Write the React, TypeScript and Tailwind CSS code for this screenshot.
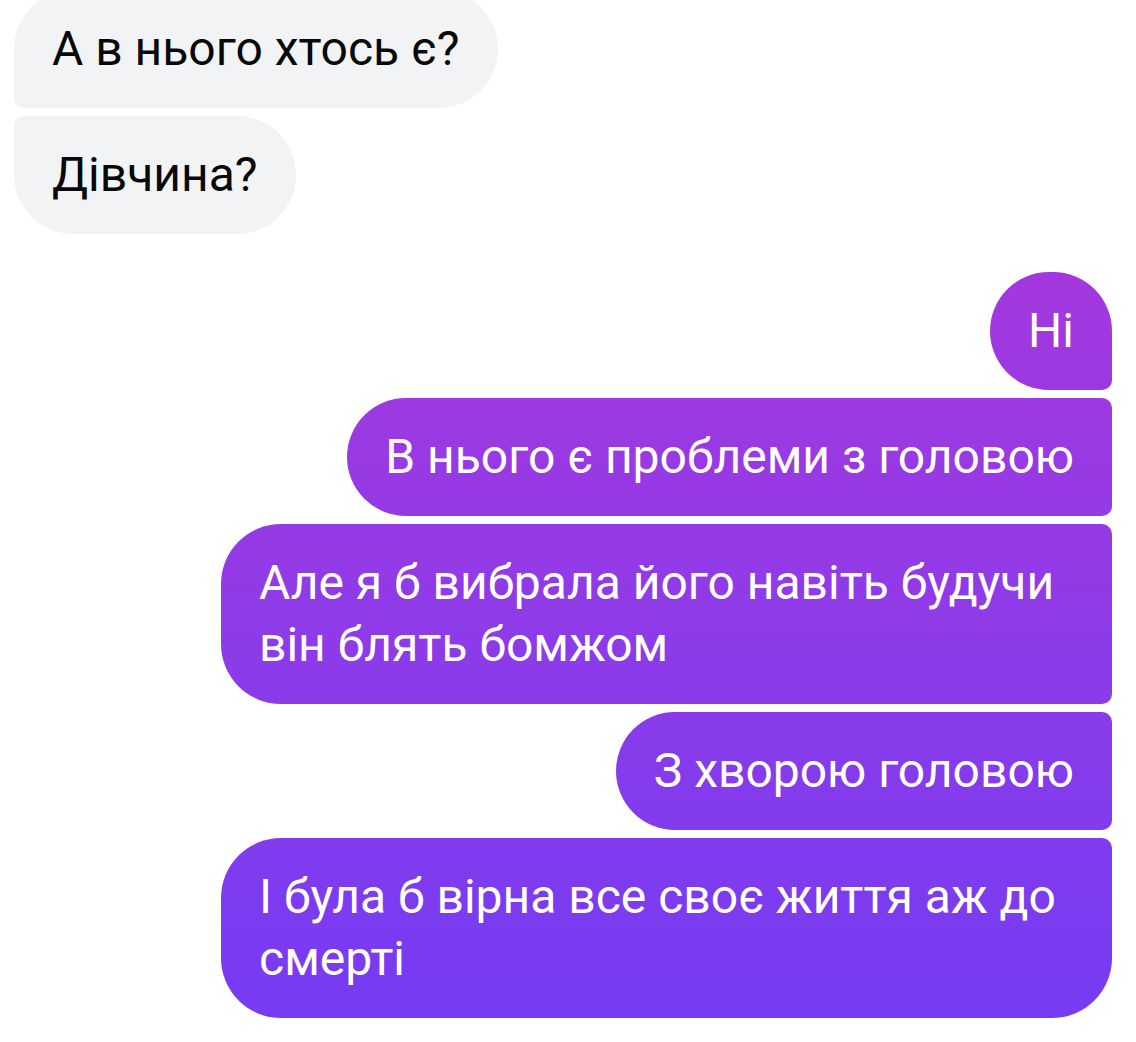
const font = { fontFamily: "Roboto, 'Noto Sans', sans-serif" }

type Msg = { text: string; mine: boolean; shape: string }

const messages: Msg[] = [
  { text: "А в нього хтось є?", mine: false, shape: "rounded-[60px] rounded-bl-[10px] -mt-[10px]" },
  { text: "Дівчина?", mine: false, shape: "rounded-[60px] rounded-tl-[10px]" },
  { text: "Ні", mine: true, shape: "rounded-[60px] rounded-br-[10px] mt-[30px]" },
  { text: "В нього є проблеми з головою", mine: true, shape: "rounded-[60px] rounded-r-[10px]" },
  { text: "Але я б вибрала його навіть будучи він блять бомжом", mine: true, shape: "rounded-[60px] rounded-r-[10px]" },
  { text: "З хворою головою", mine: true, shape: "rounded-[60px] rounded-r-[10px]" },
  { text: "І була б вірна все своє життя аж до смерті", mine: true, shape: "rounded-[60px] rounded-tr-[10px]" },
]

const Bubble: React.FC<{ m: Msg }> = ({ m }) => {
  const side = m.mine
    ? "self-end bg-linear-to-b from-[#b431d7] to-[#743bf3] bg-fixed text-white"
    : "self-start bg-[#f2f3f5] text-[#080808]"
  return (
    <div className={`${side} ${m.shape} max-w-[891px] px-[38px] py-[28px] text-[48px] leading-[62px]`}>
      {m.text}
    </div>
  )
}

export default function App() {
  return (
    <div className="w-[1136px] h-[1042px] overflow-hidden bg-white" style={font}>
      <div className="flex flex-col gap-[8px] pl-[14px] pr-[24px]">
        {messages.map((m, i) => (
          <Bubble key={i} m={m} />
        ))}
      </div>
    </div>
  )
}
